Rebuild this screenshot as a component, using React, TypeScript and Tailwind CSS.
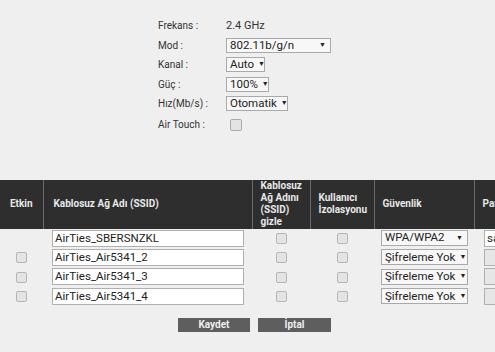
import React from "react";

type Row = { enabled: boolean | null; ssid: string; security: string; pass?: string };

const rows: Row[] = [
  { enabled: null, ssid: "AirTies_SBERSNZKL", security: "WPA/WPA2", pass: "sa" },
  { enabled: false, ssid: "AirTies_Air5341_2", security: "Şifreleme Yok" },
  { enabled: false, ssid: "AirTies_Air5341_3", security: "Şifreleme Yok" },
  { enabled: false, ssid: "AirTies_Air5341_4", security: "Şifreleme Yok" },
];

function Box() {
  return <span className="inline-block h-[11px] w-[11px] rounded-[2px] border border-[#b5b5b5] bg-[#e4e4e4] align-middle" />;
}

function Select({ value, w }: { value: string; w: string }) {
  return (
    <div className={`flex h-[15px] items-center justify-between border border-[#a9a9a9] bg-[#f7f7f7] pl-[3px] pr-[4px] text-[11.5px] leading-none text-[#222] ${w}`}>
      <span className="whitespace-nowrap">{value}</span>
      <span className="ml-[4px] text-[7px] leading-none">▼</span>
    </div>
  );
}

function Field({ label, children }: { label: string; children: React.ReactNode }) {
  return (
    <div className="flex h-[19.5px] items-center">
      <div className="w-[68px] text-[10px] text-[#333]">{label}</div>
      {children}
    </div>
  );
}

export default function App() {
  return (
    <div className="h-[352px] w-[495px] overflow-hidden bg-[#efefef] font-['Roboto',sans-serif]">
      <div className="pl-[158px] pt-[16px]">
        <Field label="Frekans :">
          <span className="text-[11px] text-[#333]">2.4 GHz</span>
        </Field>
        <Field label="Mod :">
          <Select value="802.11b/g/n" w="w-[105px]" />
        </Field>
        <Field label="Kanal :">
          <Select value="Auto" w="w-[39px]" />
        </Field>
        <Field label="Güç :">
          <Select value="100%" w="w-[43px]" />
        </Field>
        <Field label="Hız(Mb/s) :">
          <Select value="Otomatik" w="w-[62px]" />
        </Field>
        <div className="flex h-[22px] items-center">
          <div className="w-[72px] text-[10px] text-[#333]">Air Touch :</div>
          <span className="inline-block h-[12px] w-[12px] rounded-[2px] border border-[#aaa] bg-[#e4e4e4]" />
        </div>
      </div>

      <table className="mt-[44px] w-[520px] table-fixed border-collapse text-left">
        <colgroup>
          <col className="w-[43px]" />
          <col className="w-[209px]" />
          <col className="w-[58px]" />
          <col className="w-[64px]" />
          <col className="w-[100px]" />
          <col className="w-[46px]" />
        </colgroup>
        <thead>
          <tr className="h-[49px] bg-[#2e2e2e] text-[10px] font-bold leading-[12px] text-[#e8e8e8]">
            <th className="border-r border-[#6a6a6a] text-center">Etkin</th>
            <th className="border-r border-[#6a6a6a] pl-[10px]">Kablosuz Ağ Adı (SSID)</th>
            <th className="border-r border-[#6a6a6a] pl-[8px]">Kablosuz Ağ Adını (SSID) gizle</th>
            <th className="border-r border-[#6a6a6a] pl-[8px]">Kullanıcı İzolasyonu</th>
            <th className="border-r border-[#6a6a6a] pl-[8px]">Güvenlik</th>
            <th className="pl-[8px]">Parola</th>
          </tr>
        </thead>
        <tbody className="text-[11px] leading-none">
          {rows.map((r, i) => (
            <tr key={r.ssid} className={i === 0 ? "h-[19px]" : "h-[19.5px]"}>
              <td className="p-0 text-center">{r.enabled !== null && <Box />}</td>
              <td className="p-0 pl-[9px]">
                <div className="h-[17px] w-[192px] border border-[#b0b0b0] bg-white pl-[2px] text-[11.5px] leading-[15px] text-[#222]">{r.ssid}</div>
              </td>
              <td className="p-0 text-center">
                <Box />
              </td>
              <td className="p-0 text-center">
                <Box />
              </td>
              <td className="p-0 pl-[7px]">
                <Select value={r.security} w="w-[87px] h-[16px]" />
              </td>
              <td className="p-0 pl-[10px]">
                <div className={`h-[17px] w-[40px] border border-[#b0b0b0] pl-[2px] text-[11.5px] leading-[15px] text-[#222] ${r.pass ? "bg-white" : "bg-[#e6e6e6]"}`}>{r.pass}</div>
              </td>
            </tr>
          ))}
        </tbody>
      </table>

      <div className="mt-[12px] flex gap-[8px] pl-[178px]">
        <button className="h-[14px] w-[72px] bg-[#5e5e5e] text-[10px] font-bold leading-[14px] text-[#eee]">Kaydet</button>
        <button className="h-[14px] w-[73px] bg-[#5e5e5e] text-[10px] font-bold leading-[14px] text-[#eee]">İptal</button>
      </div>
    </div>
  );
}
